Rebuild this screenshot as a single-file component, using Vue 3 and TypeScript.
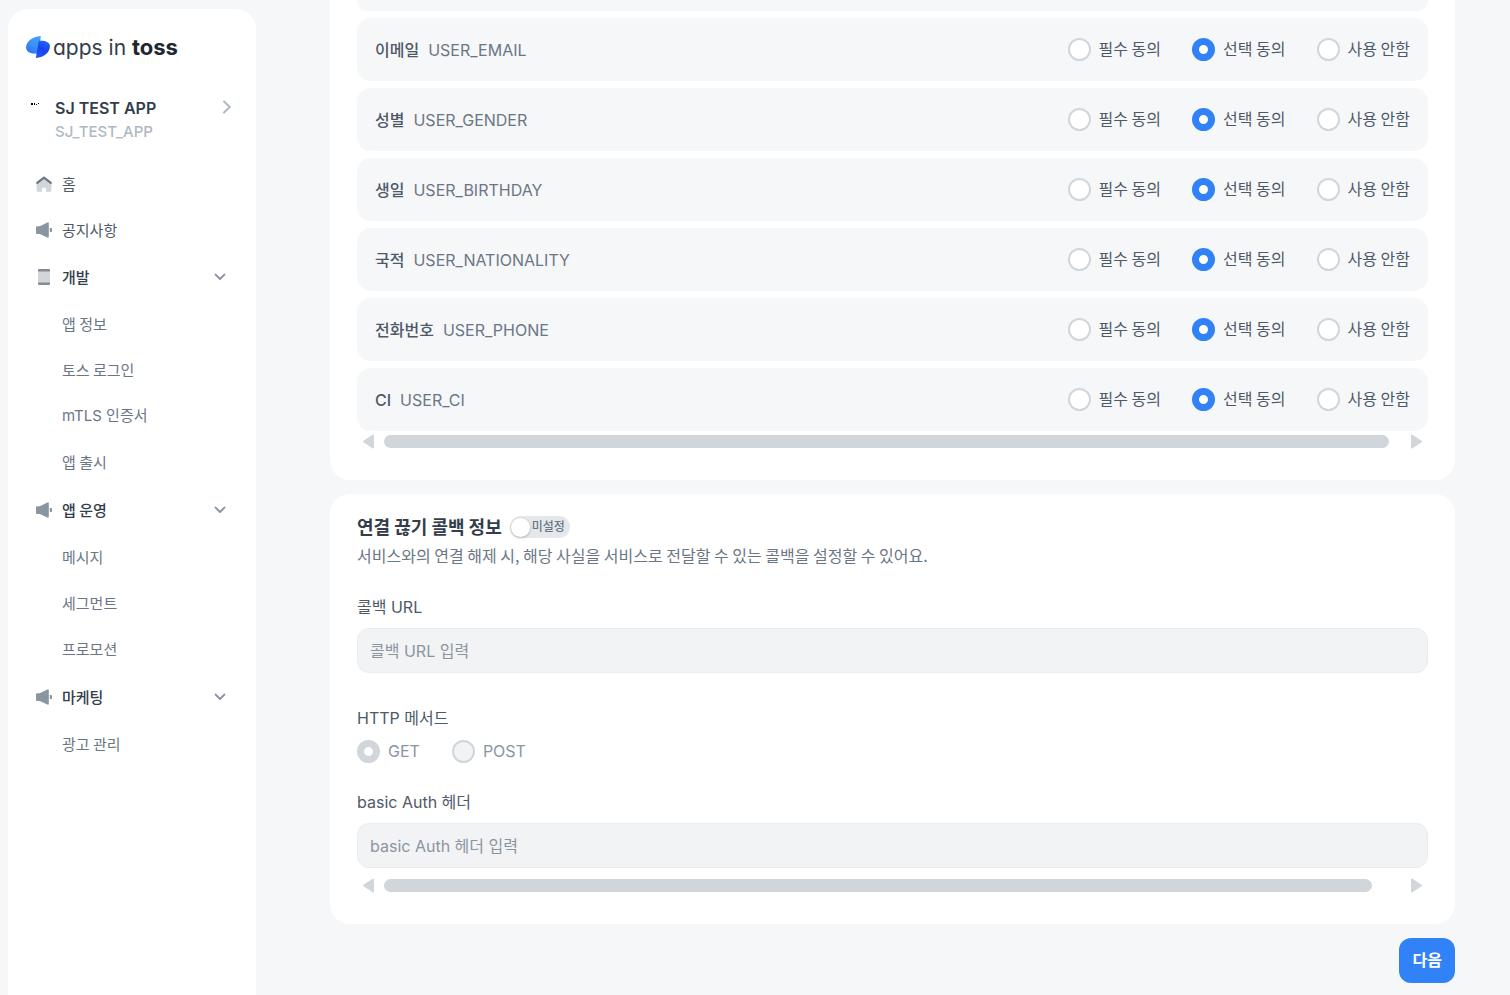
<script setup lang="ts">
import { reactive, ref } from 'vue'

type Consent = 'required' | 'optional' | 'none'

interface ScopeRow {
  label: string
  code: string
  consent: Consent
}

interface MenuEntry {
  label: string
  icon: 'home' | 'horn' | 'phone'
  children?: string[]
}

const menu: MenuEntry[] = [
  { label: '홈', icon: 'home' },
  { label: '공지사항', icon: 'horn' },
  { label: '개발', icon: 'phone', children: ['앱 정보', '토스 로그인', 'mTLS 인증서', '앱 출시'] },
  { label: '앱 운영', icon: 'horn', children: ['메시지', '세그먼트', '프로모션'] },
  { label: '마케팅', icon: 'horn', children: ['광고 관리'] },
]

const consents: { value: Consent; label: string }[] = [
  { value: 'required', label: '필수 동의' },
  { value: 'optional', label: '선택 동의' },
  { value: 'none', label: '사용 안함' },
]

const rows = reactive<ScopeRow[]>([
  { label: '이메일', code: 'USER_EMAIL', consent: 'optional' },
  { label: '성별', code: 'USER_GENDER', consent: 'optional' },
  { label: '생일', code: 'USER_BIRTHDAY', consent: 'optional' },
  { label: '국적', code: 'USER_NATIONALITY', consent: 'optional' },
  { label: '전화번호', code: 'USER_PHONE', consent: 'optional' },
  { label: 'CI', code: 'USER_CI', consent: 'optional' },
])

const scopeThumb = ref(98.8)
const callbackThumb = ref(97.1)
const callbackOn = ref(false)
const callbackUrl = ref('')
const method = ref('GET')
const authHeader = ref('')

const hasLatin = (text: string): boolean => /[A-Za-z]/.test(text)
</script>

<template>
  <div class="page">
    <aside class="sidebar">
      <a class="logo" href="#">
        <svg class="logo-mark" viewBox="0 0 24 22" aria-hidden="true">
          <defs>
            <linearGradient id="markLeft" x1="0.8" y1="0" x2="0.2" y2="1">
              <stop offset="0" stop-color="#3fa0fb" />
              <stop offset="0.5" stop-color="#3a93f8" />
              <stop offset="1" stop-color="#2f6ff5" />
            </linearGradient>
            <linearGradient id="markRight" x1="0.7" y1="0" x2="0.3" y2="1">
              <stop offset="0" stop-color="#2468f5" />
              <stop offset="0.5" stop-color="#1a43f0" />
              <stop offset="1" stop-color="#2456f3" />
            </linearGradient>
          </defs>
          <path d="M14.800 0 C6 0.600 0 5.800 0 11.600 C0 15.800 4.500 18 10.400 17.600 L12.800 17 Z" fill="url(#markLeft)" />
          <path d="M12.800 4.700 C19.500 4.200 24 6.300 24 10 C24 15.800 18.500 21.400 9.800 22 Z" fill="url(#markRight)" />
        </svg>
        <span class="logo-text">apps in <b>toss</b></span>
      </a>

      <button class="app-switch" type="button">
        <svg class="app-thumb" viewBox="0 0 8 3" shape-rendering="crispEdges" aria-hidden="true">
          <path d="M0 0h2v2H0zM3 0h1v2H3zM5 1h1v1H5zM7 0h1v1H7z" fill="#000" />
        </svg>
        <span class="app-names">
          <strong>SJ TEST APP</strong>
          <span>SJ_TEST_APP</span>
        </span>
        <svg class="chevron-right" viewBox="0 0 10 14" aria-hidden="true">
          <path d="M2 1.500 L7.800 7 L2 12.500" fill="none" stroke="#b0b8c1" stroke-width="2" stroke-linecap="round" stroke-linejoin="round" />
        </svg>
      </button>

      <nav class="menu">
        <div v-for="item in menu" :key="item.label" class="menu-group" :class="{ 'has-children': item.children }">
          <a class="menu-item" href="#">
            <svg v-if="item.icon === 'home'" class="menu-icon" viewBox="0 0 16 16" aria-hidden="true">
              <path d="M0.500 7 L8 1.500 L15.500 7 V14.300 Q15.500 15.700 14.100 15.700 H10 V12.500 Q10 11.700 9.200 11.700 H6.800 Q6 11.700 6 12.500 V15.700 H1.900 Q0.500 15.700 0.500 14.300 Z" fill="#d1d6db" />
              <path d="M1.200 6.800 L8 1.600 L14.800 6.800" fill="none" stroke="#6b7684" stroke-width="2.200" stroke-linecap="round" stroke-linejoin="round" />
            </svg>
            <svg v-else-if="item.icon === 'horn'" class="menu-icon" viewBox="0 0 16 16" aria-hidden="true">
              <path d="M0 5.200 Q0 4.200 1 4.200 H3.800 L11.400 0.500 Q12.800 0 12.800 1.200 V14.800 Q12.800 16 11.400 15.500 L3.800 11.900 H1 Q0 11.900 0 10.900 Z" fill="#8b95a1" />
              <path d="M13.800 6 h1.400 q0.800 0 0.800 0.800 v2.400 q0 0.800 -0.800 0.800 h-1.400 z" fill="#8b95a1" />
            </svg>
            <svg v-else class="menu-icon" viewBox="0 0 16 16" aria-hidden="true">
              <rect x="2" y="1" width="12" height="14" fill="#d1d6db" />
              <path d="M2 2.500 V1.200 Q2 0 3.200 0 H12.800 Q14 0 14 1.200 V2.500 Z M2 13.500 V14.800 Q2 16 3.200 16 H12.800 Q14 16 14 14.800 V13.500 Z" fill="#858a90" />
            </svg>
            <span class="menu-label">{{ item.label }}</span>
            <svg v-if="item.children" class="chevron-down" viewBox="0 0 12 8" aria-hidden="true">
              <path d="M1.500 1.500 L6 6 L10.500 1.500" fill="none" stroke="#8b95a1" stroke-width="1.800" stroke-linecap="round" stroke-linejoin="round" />
            </svg>
          </a>
          <a v-for="child in item.children" :key="child" class="menu-child" :class="{ latin: hasLatin(child) }" href="#">{{ child }}</a>
        </div>
      </nav>
    </aside>

    <main class="content">
      <section class="card scopes">
        <div class="scope-list">
          <div class="scope-tail"></div>
          <div v-for="row in rows" :key="row.code" class="scope-row" role="radiogroup" :aria-labelledby="row.code">
            <div :id="row.code" class="scope-name">
              <strong>{{ row.label }}</strong>
              <span>{{ row.code }}</span>
            </div>
            <div class="scope-options">
              <label v-for="option in consents" :key="option.value" class="radio">
                <input v-model="row.consent" type="radio" :name="'consent-' + row.code" :value="option.value" />
                <span>{{ option.label }}</span>
              </label>
            </div>
          </div>
        </div>
        <div class="scrollbar">
          <svg viewBox="0 0 11 14" aria-hidden="true"><path d="M10 1.500 V13.500 L1 7.500 Z" /></svg>
          <div class="track"><div class="thumb" :style="{ width: scopeThumb + '%' }"></div></div>
          <svg viewBox="0 0 11 14" aria-hidden="true"><path d="M1 1.500 V13.500 L10 7.500 Z" /></svg>
        </div>
      </section>

      <section class="card callback">
        <header class="callback-head">
          <h2>연결 끊기 콜백 정보</h2>
          <label class="switch">
            <input v-model="callbackOn" type="checkbox" />
            <span>미설정</span>
          </label>
        </header>
        <p class="callback-note">서비스와의 연결 해제 시, 해당 사실을 서비스로 전달할 수 있는 콜백을 설정할 수 있어요.</p>

        <div class="field">
          <label class="field-label" for="callback-url">콜백 URL</label>
          <input id="callback-url" v-model="callbackUrl" class="text-box" type="text" placeholder="콜백 URL 입력" disabled />
        </div>

        <div class="field method" role="radiogroup" aria-labelledby="method-label">
          <span id="method-label" class="field-label">HTTP 메서드</span>
          <div class="method-options">
            <label v-for="name in ['GET', 'POST']" :key="name" class="radio">
              <input v-model="method" type="radio" name="method" :value="name" disabled />
              <span>{{ name }}</span>
            </label>
          </div>
        </div>

        <div class="field auth">
          <label class="field-label" for="auth-header">basic Auth 헤더</label>
          <input id="auth-header" v-model="authHeader" class="text-box" type="text" placeholder="basic Auth 헤더 입력" disabled />
        </div>

        <div class="scrollbar">
          <svg viewBox="0 0 11 14" aria-hidden="true"><path d="M10 1.500 V13.500 L1 7.500 Z" /></svg>
          <div class="track"><div class="thumb" :style="{ width: callbackThumb + '%' }"></div></div>
          <svg viewBox="0 0 11 14" aria-hidden="true"><path d="M1 1.500 V13.500 L10 7.500 Z" /></svg>
        </div>
      </section>

      <button class="next" type="button">다음</button>
    </main>
  </div>
</template>

<style>
body {
  background: #f6f7f9;
}
</style>

<style scoped>
.page,
.page * {
  box-sizing: border-box;
}

.page {
  display: flex;
  min-height: 100vh;
  font-family: Inter, "Noto Sans CJK KR", sans-serif;
  font-size: 16px;
  line-height: 24px;
  color: #4e5968;
}

.page button,
.page input {
  font-family: inherit;
  font-size: inherit;
  line-height: inherit;
}

.menu,
.scope-options,
.callback-head,
.callback-note,
.page .next {
  font-family: "Noto Sans CJK KR", Inter, sans-serif;
}

a {
  color: inherit;
  text-decoration: none;
}

.sidebar {
  flex: none;
  width: 248px;
  margin: 9px 0 0 8px;
  padding: 24px 18px 0;
  background: #fff;
  border-radius: 20px 20px 0 0;
}

.logo {
  display: flex;
  align-items: center;
  gap: 3px;
  height: 28px;
  color: #333d4b;
}

.logo-mark {
  width: 24px;
  height: 22px;
}

.logo-text {
  font-size: 21px;
  line-height: 26px;
  font-feature-settings: "cv11";
}

.logo-text b {
  font-size: 22px;
  font-weight: 700;
  color: #202632;
}

.app-switch {
  display: flex;
  align-items: center;
  width: 100%;
  margin-top: 33px;
  padding: 0 6px 0 5px;
  border: 0;
  background: none;
  text-align: left;
}

.app-thumb {
  align-self: flex-start;
  width: 8px;
  height: 3px;
  margin-top: 9px;
}

.app-names {
  flex: 1;
  display: flex;
  flex-direction: column;
  margin-left: 16px;
  padding-top: 2px;
  line-height: 24px;
  font-weight: 500;
  color: #b0b8c1;
}

.app-names span {
  font-size: 15px;
}

.app-names strong {
  font-weight: 600;
  color: #333d4b;
}

.chevron-right {
  align-self: flex-start;
  width: 10px;
  height: 14px;
  margin-top: 6px;
}

.menu {
  margin-top: 17px;
  font-size: 15px;
}

.menu-item {
  display: flex;
  align-items: center;
  height: 46px;
  padding: 0 12px 0 10px;
}

.has-children {
  padding-bottom: 1px;
}

.has-children .menu-item {
  height: 48px;
  font-weight: 500;
  color: #333d4b;
}

.menu-icon {
  width: 16px;
  height: 16px;
}

.menu-label {
  flex: 1;
  margin-left: 10px;
}

.chevron-down {
  width: 12px;
  height: 8px;
}

.menu-child {
  display: flex;
  align-items: center;
  height: 46px;
  padding-left: 36px;
  color: #6b7684;
}

.menu-child.latin {
  font-family: Inter, "Noto Sans CJK KR", sans-serif;
}

.content {
  flex: 1;
  min-width: 0;
  display: flex;
  flex-direction: column;
  padding: 0 55px 12px 74px;
}

.card {
  padding: 0 27px;
  background: #fff;
  border-radius: 20px;
}

.scopes {
  padding-bottom: 32px;
  border-radius: 0 0 20px 20px;
}

.scope-list {
  display: flex;
  flex-direction: column;
  gap: 7px;
}

.scope-tail {
  height: 11px;
  background: #f6f7f9;
  border-radius: 0 0 14px 14px;
}

.scope-row {
  display: flex;
  align-items: center;
  justify-content: space-between;
  height: 63px;
  padding: 0 18px;
  background: #f6f7f9;
  border-radius: 14px;
}

.scope-name {
  display: flex;
  gap: 9px;
  color: #6b7684;
}

.scope-name strong {
  font-weight: 500;
  color: #4e5968;
}

.scope-options {
  display: flex;
  gap: 31px;
}

.scope-options span {
  padding-bottom: 3px;
}

.radio {
  display: flex;
  align-items: center;
  gap: 8px;
}

.radio input {
  appearance: none;
  width: 23px;
  height: 23px;
  margin: 0;
  border: 2px solid #d1d6db;
  border-radius: 50%;
  background: #fff;
}

.radio input:checked {
  border: 7px solid #3182f6;
}

.radio input:disabled {
  background: #f2f3f5;
}

.radio input:disabled:checked {
  border-color: #d1d6db;
  background: #fff;
}

.scrollbar {
  display: flex;
  align-items: center;
  gap: 10px;
  height: 14px;
  margin-top: 3px;
  padding: 0 6px;
}

.scrollbar svg {
  flex: none;
  width: 11px;
  height: 14px;
  overflow: visible;
  fill: #d1d6db;
  stroke: #d1d6db;
  stroke-width: 2;
  stroke-linejoin: round;
}

.track {
  flex: 1;
}

.thumb {
  height: 13px;
  border-radius: 7px;
  background: #d1d6db;
}

.callback {
  margin-top: 14px;
  padding-top: 20px;
  padding-bottom: 32px;
}

.callback-head {
  display: flex;
  align-items: center;
  gap: 8px;
}

.callback-head h2 {
  margin: 0;
  padding-bottom: 2px;
  font-size: 18px;
  line-height: 24px;
  font-weight: 600;
  color: #333d4b;
}

.switch {
  display: flex;
  align-items: center;
  gap: 2px;
  height: 22px;
  padding: 0 5px 0 1px;
  border-radius: 11px;
  background: #e5e8eb;
  font-size: 12px;
  line-height: 20px;
  font-weight: 500;
  color: #6b7684;
}

.switch span {
  padding-bottom: 2px;
}

.switch input {
  appearance: none;
  width: 19px;
  height: 19px;
  margin: 0;
  border-radius: 50%;
  background: #fff;
  box-shadow: 0 1px 3px rgba(0, 0, 0, 0.25);
}

.callback-note {
  margin: 3px 0 0;
  color: #6b7684;
}

.field {
  display: flex;
  flex-direction: column;
  gap: 9px;
  margin-top: 28px;
}

.text-box {
  width: 100%;
  height: 45px;
  padding: 0 12px;
  border: 1px solid #eaedf0;
  border-radius: 12px;
  background: #f2f3f5;
  color: #8b95a1;
}

.text-box::placeholder {
  color: #8b95a1;
  opacity: 1;
}

.method {
  margin-top: 33px;
}

.method-options {
  display: flex;
  gap: 32px;
  color: #8b95a1;
}

.auth {
  margin-top: 27px;
}

.auth + .scrollbar {
  margin-top: 10px;
}

.next {
  align-self: flex-end;
  height: 45px;
  margin-top: 14px;
  padding: 0 13px 3px 14px;
  border: 0;
  border-radius: 12px;
  background: #3182f6;
  font-weight: 600;
  color: #fff;
}
</style>
